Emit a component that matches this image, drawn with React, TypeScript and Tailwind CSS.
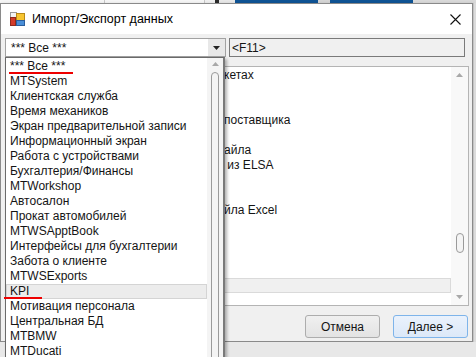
import React from "react";

const FONT = { fontFamily: '"Liberation Sans", "Noto Sans", sans-serif' };

const items = [
  "*** Все ***",
  "MTSystem",
  "Клиентская служба",
  "Время механиков",
  "Экран предварительной записи",
  "Информационный экран",
  "Работа с устройствами",
  "Бухгалтерия/Финансы",
  "MTWorkshop",
  "Автосалон",
  "Прокат автомобилей",
  "MTWSApptBook",
  "Интерфейсы для бухгалтерии",
  "Забота о клиенте",
  "MTWSExports",
  "KPI",
  "Мотивация персонала",
  "Центральная БД",
  "MTBMW",
  "MTDucati",
];

const mainRows: string[] = [
  "кетах",
  "",
  "",
  "поставщика",
  "",
  "айла",
  " из ELSA",
  "",
  "",
  "йла Excel",
  "",
  "",
  "",
  "",
  "",
];

function UpArrow() {
  return (
    <svg width="7" height="4" viewBox="0 0 7 4">
      <path d="M0 4 L3.5 0 L7 4 Z" fill="#a8a8a8" />
    </svg>
  );
}
function DownArrow({ color = "#a8a8a8" }: { color?: string }) {
  return (
    <svg width="7" height="4" viewBox="0 0 7 4">
      <path d="M0 0 L7 0 L3.5 4 Z" fill={color} />
    </svg>
  );
}

function TitleIcon() {
  return (
    <svg width="15" height="15" viewBox="0 0 15 15">
      <rect x="0.5" y="0.5" width="6" height="5" fill="#f4f4f4" stroke="#9a9a9a" />
      <rect x="0.5" y="5.5" width="5" height="8" fill="#d23a2a" stroke="#8e2a1e" />
      <rect x="6.5" y="1.5" width="8" height="7" fill="#f7c531" stroke="#b88a17" />
      <rect x="6.5" y="8.5" width="8" height="5" fill="#4a8fd8" stroke="#2b5e9c" />
    </svg>
  );
}

export default function App() {
  return (
    <div
      className="relative w-[476px] h-[357px] overflow-hidden bg-[#e4e4e4] text-[#141414] flex flex-col"
      style={FONT}
    >
      {/* background strip of the app behind */}
      <div className="h-[3px] flex shrink-0">
        <div className="w-[104px] bg-[#f6f6f6]" />
        <div className="w-[1px] bg-[#c8c8c8]" />
        <div className="w-[99px] bg-[#f6f6f6]" />
        <div className="w-[1px] bg-[#c8c8c8]" />
        <div className="w-[10px] bg-[#f0f0f0]" />
        <div className="w-[4px] bg-[#2b2b2b]" />
        <div className="w-[16px] bg-[#e8e8e8]" />
        <div className="w-[83px] bg-[#0f5495]" />
        <div className="w-[12px] bg-[#d6d6d6]" />
        <div className="w-[83px] bg-[#0f5495]" />
        <div className="flex-1 bg-[#dadada]" />
      </div>

      <div className="flex shrink-0">
        {/* window */}
        <div className="w-[473px] h-[339px] border border-[#8a8a8a] bg-[#f0f0f0] flex flex-col shadow-[1px_2px_4px_rgba(0,0,0,0.35)]">
          {/* title bar */}
          <div className="h-[30px] bg-white flex items-center pl-[9px] pr-[9px] shrink-0">
            <TitleIcon />
            <span className="ml-[7px] text-[12.5px] leading-none text-black">Импорт/Экспорт данных</span>
            <div className="flex-1" />
            <svg width="11" height="11" viewBox="0 0 11 11" className="mr-[2px]">
              <path d="M0.5 0.5 L10.5 10.5 M10.5 0.5 L0.5 10.5" stroke="#111" strokeWidth="1.1" />
            </svg>
          </div>

          {/* client */}
          <div className="flex-1 flex flex-col pl-[4px] pt-[4px]">
            <div className="flex gap-[3px] h-[19px]">
              <div className="w-[221px] border border-[#a2a2a2] bg-white flex items-center">
                <span className="pl-[5px] text-[12px] flex-1">*** Все ***</span>
                <div className="w-[17px] h-full bg-[#e8e8e8] flex items-center justify-center">
                  <DownArrow color="#222" />
                </div>
              </div>
              <div className="w-[236px] border border-[#7a7a7a] bg-[#f0f0f0] flex items-center">
                <span className="pl-[2px] text-[12px]">&lt;F11&gt;</span>
              </div>
            </div>

            {/* main list */}
            <div className="mt-[9px] w-[464px] h-[240px] border border-[#b4b4b4] bg-white flex">
              <div className="flex-1 pt-[1px] flex flex-col">
                {mainRows.map((t, i) => (
                  <div
                    key={i}
                    className={
                      i === 14
                        ? "h-[15px] leading-[13px] text-[12px] pl-[218px] bg-[#f0f0f0] border border-[#dadada]"
                        : "h-[15px] leading-[15px] text-[12px] pl-[218px] whitespace-pre"
                    }
                  >
                    {t}
                  </div>
                ))}
              </div>
              <div className="w-[17px] bg-[#f8f8f8] flex flex-col items-center">
                <div className="h-[16px] flex items-center justify-center">
                  <UpArrow />
                </div>
                <div className="flex-1 relative w-full flex flex-col items-center">
                  <div className="mt-[150px] w-[8px] h-[20px] rounded-full border border-[#9a9a9a] bg-[#f4f4f4]" />
                </div>
                <div className="h-[16px] flex items-center justify-center">
                  <DownArrow />
                </div>
              </div>
            </div>

            {/* buttons */}
            <div className="mt-[9px] flex justify-end gap-[13px] pr-[4px]">
              <button className="w-[75px] h-[23px] rounded-[3px] border border-[#adadad] bg-[linear-gradient(#f0f0f0,#e3e3e3)] text-[12px]">
                Отмена
              </button>
              <button className="w-[75px] h-[23px] rounded-[3px] border border-[#7eb4ea] bg-[linear-gradient(#eaf2fc,#dce8f8)] text-[12px]">
                Далее &gt;
              </button>
            </div>
          </div>
        </div>
        <div className="flex-1 bg-[#dcdcdc] border-l border-[#c4c4c4]" />
      </div>
      <div className="flex-1 bg-[#e8e8e8]" />

      {/* dropdown list (popup over content) */}
      <div className="absolute left-[5px] top-[57px] w-[220px] h-[310px] border border-[#6a6a6a] border-r-[2px] border-r-[#7a7a7a] bg-white flex shadow-[2px_2px_3px_rgba(0,0,0,0.3)]">
        <div className="flex-1 flex flex-col pt-[1px]">
          {items.map((t, i) => (
            <div
              key={i}
              className={
                i === 15
                  ? "h-[15px] leading-[13px] text-[12px] pl-[3px] bg-[#ececec] border border-[#d4d4d4]"
                  : "h-[15px] leading-[15px] text-[12px] pl-[4px] whitespace-nowrap"
              }
            >
              {t}
            </div>
          ))}
        </div>
        <div className="w-[16px] bg-[#f4f4f4] flex flex-col items-center">
          <div className="h-[17px] flex items-center justify-center">
            <UpArrow />
          </div>
          <div className="mt-[2px] w-[8px] h-[400px] rounded-full border border-[#9a9a9a] bg-[#f4f4f4]" />
        </div>
      </div>

      {/* red annotation underlines */}
      <div className="absolute left-[9px] top-[72px] w-[64px] h-[2px] bg-[#ee0000]" />
      <div className="absolute left-[4px] top-[297px] w-[38px] h-[2px] bg-[#ee0000]" />
    </div>
  );
}
